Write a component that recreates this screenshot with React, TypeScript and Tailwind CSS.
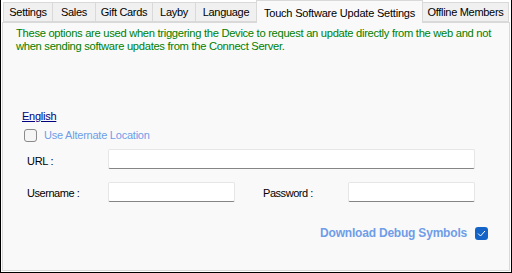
import React from "react";

const font = { fontFamily: '"Liberation Sans", Arial, sans-serif' };

function Tab({ label, w }: { label: string; w: string }) {
  return (
    <div
      className={`${w} h-[20px] mt-[2px] flex items-center justify-center border border-[#d9d9d9] border-r-0 bg-[#f0f0f0] text-[11px] tracking-[-0.3px] text-black whitespace-nowrap`}
    >
      {label}
    </div>
  );
}

function Input({ w }: { w: string }) {
  return (
    <div
      className={`${w} h-[20px] bg-white border border-[#e6e6e6] border-b-[#858585] rounded-[2px]`}
    />
  );
}

export default function App() {
  return (
    <div
      className="w-[512px] h-[273px] bg-white border-l border-r border-b border-black flex flex-col overflow-hidden"
      style={font}
    >
      <div className="flex h-[22px] pl-[2px] items-start">
        <Tab label="Settings" w="w-[49px]" />
        <Tab label="Sales" w="w-[43px]" />
        <Tab label="Gift Cards" w="w-[57px]" />
        <Tab label="Layby" w="w-[43px]" />
        <Tab label="Language" w="w-[61px]" />
        <div className="w-[167px] h-[23px] relative z-10 flex items-start pt-[4px] justify-center border border-[#d9d9d9] border-b-0 bg-[#f9f9f9] text-[11px] tracking-[-0.2px] text-black whitespace-nowrap">
          Touch Software Update Settings
        </div>
        <div className="w-[86px] h-[20px] mt-[2px] flex items-center justify-center border border-[#d9d9d9] border-l-0 bg-[#f0f0f0] text-[11px] tracking-[-0.3px] text-black whitespace-nowrap">
          Offline Members
        </div>
      </div>
      <div className="flex-1 ml-[1px] mr-[1px] mb-[1px] border border-[#d9d9d9] bg-[#f9f9f9] flex flex-col">
        <div className="pl-[13px] pt-[4px] text-[11.2px] leading-[13px] tracking-[-0.3px] text-[#008000] whitespace-nowrap">
          These options are used when triggering the Device to request an update directly from the web and not
          <br />
          when sending software updates from the Connect Server.
        </div>
        <div className="pl-[19px] mt-[56px] text-[11px] leading-[14px] tracking-[-0.25px] text-[#000080] underline whitespace-nowrap">
          English
        </div>
        <div className="flex items-center mt-[5px] pl-[21px] h-[14px]">
          <div className="w-[13px] h-[13px] border border-[#8a8a8a] rounded-[3px] bg-[#f5f5f5]" />
          <span className="ml-[7px] text-[11px] tracking-[-0.23px] text-[#6f9de8] whitespace-nowrap">Use Alternate Location</span>
        </div>
        <div className="flex items-center mt-[7px] h-[20px]">
          <span className="w-[105px] pl-[24px] pt-[4px] text-[11px] tracking-[-0.3px] text-black whitespace-nowrap">URL :</span>
          <Input w="w-[367px]" />
        </div>
        <div className="flex items-center mt-[13px] h-[20px]">
          <span className="w-[105px] pl-[24px] pt-[3px] text-[11px] tracking-[-0.45px] text-black whitespace-nowrap">Username :</span>
          <Input w="w-[127px]" />
          <span className="ml-[28px] w-[85px] pt-[3px] text-[11px] tracking-[-0.45px] text-black whitespace-nowrap">Password :</span>
          <Input w="w-[127px]" />
        </div>
        <div className="flex items-center justify-end mt-[24px] pr-[21px] h-[14px]">
          <span className="text-[12px] font-bold tracking-[-0.2px] text-[#6f9de8] whitespace-nowrap">Download Debug Symbols</span>
          <div className="ml-[8px] w-[13px] h-[13px] rounded-[3px] bg-[#1464c8] flex items-center justify-center">
            <svg width="9" height="7" viewBox="0 0 9 7">
              <path d="M1 3.5 L3.5 6 L8 1" stroke="white" strokeWidth="1" fill="none" />
            </svg>
          </div>
        </div>
      </div>
    </div>
  );
}
